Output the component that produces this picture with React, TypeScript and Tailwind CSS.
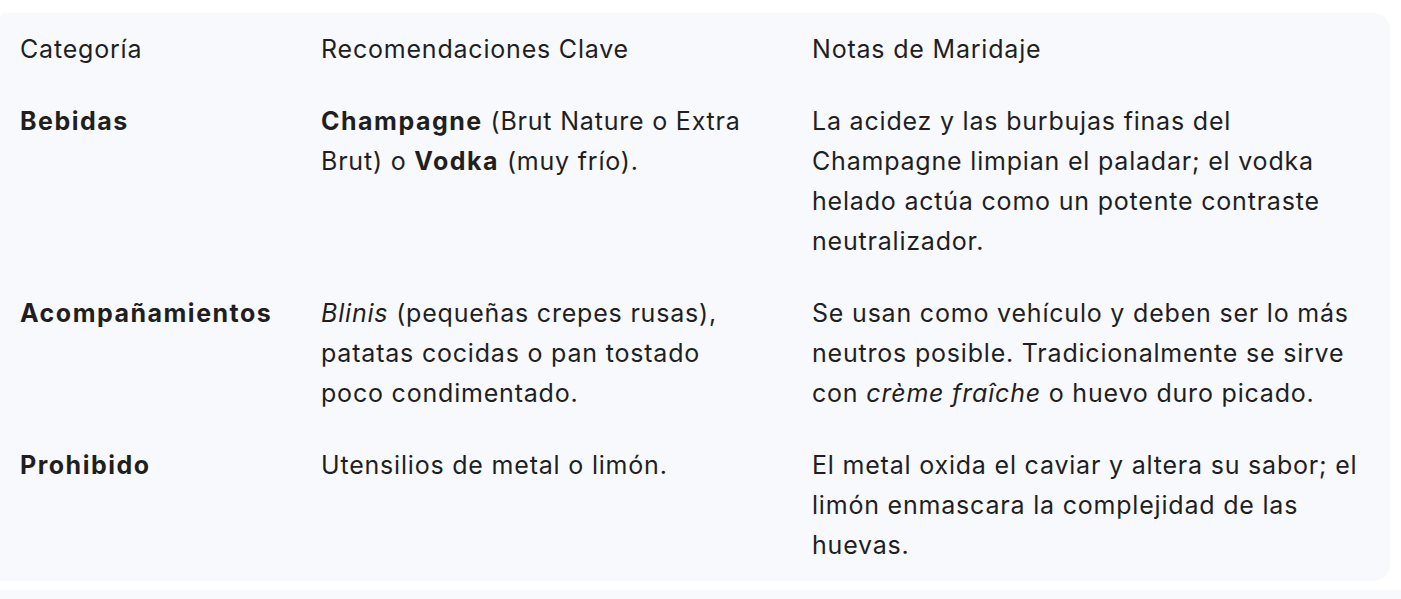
import React from "react";

const Cell = ({ children, className = "" }: { children: React.ReactNode; className?: string }) => (
  <div className={`px-5 py-4 ${className}`}>{children}</div>
);

const L = ({ children }: { children: React.ReactNode }) => (
  <div className="whitespace-nowrap">{children}</div>
);

const B = ({ children }: { children: React.ReactNode }) => (
  <b className="font-bold tracking-[1.5px]">{children}</b>
);

export default function App() {
  return (
    <div
      className="w-[1401px] h-[599px] bg-white pt-[13px] overflow-hidden text-[#1f1f1f] text-[25px] leading-[40px] tracking-[0.8px]"
      style={{ fontFamily: "Inter, 'Noto Sans', sans-serif" }}
    >
      <div className="w-[1390px] bg-[#f8f9fc] rounded-r-2xl rounded-tl-md">
        <div className="grid grid-cols-[301px_491px_1fr]">
          <Cell><L>Categoría</L></Cell>
          <Cell><L>Recomendaciones Clave</L></Cell>
          <Cell><L>Notas de Maridaje</L></Cell>

          <Cell><L><B>Bebidas</B></L></Cell>
          <Cell>
            <L><B>Champagne</B> (Brut Nature o Extra</L>
            <L>Brut) o <B>Vodka</B> (muy frío).</L>
          </Cell>
          <Cell>
            <L>La acidez y las burbujas finas del</L>
            <L>Champagne limpian el paladar; el vodka</L>
            <L>helado actúa como un potente contraste</L>
            <L>neutralizador.</L>
          </Cell>

          <Cell><L><B>Acompañamientos</B></L></Cell>
          <Cell>
            <L><i>Blinis</i> (pequeñas crepes rusas),</L>
            <L>patatas cocidas o pan tostado</L>
            <L>poco condimentado.</L>
          </Cell>
          <Cell>
            <L>Se usan como vehículo y deben ser lo más</L>
            <L>neutros posible. Tradicionalmente se sirve</L>
            <L>con <i>crème fraîche</i> o huevo duro picado.</L>
          </Cell>

          <Cell><L><B>Prohibido</B></L></Cell>
          <Cell><L>Utensilios de metal o limón.</L></Cell>
          <Cell>
            <L>El metal oxida el caviar y altera su sabor; el</L>
            <L>limón enmascara la complejidad de las</L>
            <L>huevas.</L>
          </Cell>
        </div>
      </div>
      <div className="mt-[9px] h-[40px] w-[1401px] bg-[#f8f9fc]" />
    </div>
  );
}
